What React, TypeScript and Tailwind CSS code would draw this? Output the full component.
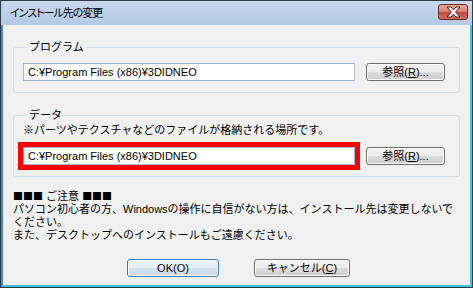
const font = "font-['Liberation_Sans','Noto_Sans_CJK_JP',sans-serif]";

const btnGray =
  "rounded-[3px] border border-[#707070] bg-[linear-gradient(to_bottom,#f2f2f2_0%,#ebebeb_50%,#dddddd_51%,#cfcfcf_100%)] shadow-[inset_0_0_0_1px_#fcfcfc] text-[11px] leading-none text-black flex items-center justify-center";

const BrowseButton = () => (
  <button className={`${btnGray} w-[79px] h-[18px] shrink-0`}>
    参照(<span className="underline">R</span>)...
  </button>
);

const PathBox = ({ marked = false }: { marked?: boolean }) => (
  <div
    className={`w-[332px] h-[18px] bg-white border border-[#a4b9d1] flex items-center pl-[4px] text-[11px] leading-none ${
      marked ? "outline-[5px] outline-solid outline-[#ff0000]" : ""
    }`}
  >
    C:¥Program Files (x86)¥3DIDNEO
  </div>
);

const CloseIcon = () => (
  <svg width="15" height="12" viewBox="0 0 15 12">
    <path
      d="M1 1h4L7.5 3.8 10 1h4L9.6 6 14 11h-4L7.5 8.2 5 11H1l4.4-5z"
      fill="#ffffff"
      stroke="#4a2320"
      strokeWidth="1"
      strokeLinejoin="round"
    />
  </svg>
);

const Squares = () => (
  <span className="font-['Noto_Sans_CJK_JP',sans-serif] text-[10px]">■■■</span>
);

export default function App() {
  return (
    <div className={`${font} w-[473px] h-[288px] border border-[#2e3a48] bg-[#2e3a48] flex flex-col text-black`}>
      {/* title bar */}
      <div className="h-[24px] shrink-0 bg-linear-to-b from-[#c8d8ed] to-[#b4c9e4] flex items-center justify-between pl-[7px] pr-[4px] border-l-2 border-[#b9cde6]">
        <span className="text-[11px] tracking-[-1px] [font-feature-settings:'palt'] text-black">
          インストール先の変更
        </span>
        <div className="w-[30px] h-[16px] -mt-[3px] rounded-[3px] border border-[#6b2a22] bg-[linear-gradient(to_bottom,#eaa898_0%,#d98170_45%,#c24a3a_55%,#d0705c_100%)] flex items-center justify-center">
          <CloseIcon />
        </div>
      </div>

      {/* client */}
      <div className="flex-1 bg-[#f0f0f0] border-l-2 border-l-[#3b86cf] border-r-2 border-r-[#3cc3ec] border-b-2 border-b-[#3cc3ec] px-[10px] flex flex-col">
        <fieldset className="mt-[15px] border border-[#d5dfe5] rounded-[3px] pl-[9px] pr-[14px] pb-[11px]">
          <legend className="ml-[4px] px-[2px] text-[11px] leading-[14px]">プログラム</legend>
          <div className="mt-[9px] flex items-end gap-[11px]">
            <PathBox />
            <BrowseButton />
          </div>
        </fieldset>

        <fieldset className="mt-[15px] border border-[#d5dfe5] rounded-[3px] pl-[9px] pr-[14px] pb-[11px]">
          <legend className="ml-[4px] px-[2px] text-[11px] leading-[14px]">データ</legend>
          <p className="mt-[1px] text-[11px] leading-[14px]">※パーツやテクスチャなどのファイルが格納される場所です。</p>
          <div className="mt-[10px] flex items-center gap-[11px]">
            <PathBox marked />
            <BrowseButton />
          </div>
        </fieldset>

        <div className="mt-[12px] text-[11px] leading-[13px]">
          <p>
            <Squares /> ご注意 <Squares />
          </p>
          <p>
            パソコン初心者の方、Windowsの操作に自信がない方は、インストール先は変更しないで
            <br />
            ください。
          </p>
          <p>また、デスクトップへのインストールもご遠慮ください。</p>
        </div>

        <div className="mt-[17px] flex justify-center gap-[35px] pl-[4px]">
          <button className="w-[92px] h-[18px] rounded-[3px] border border-[#3c7fb1] bg-[linear-gradient(to_bottom,#eef4f9_0%,#e4edf4_50%,#d7e3ed_51%,#cddbe7_100%)] shadow-[inset_0_0_0_1px_#f6fbff] text-[11px] leading-none flex items-center justify-center">
            OK(O)
          </button>
          <button className={`${btnGray} w-[96px] h-[18px]`}>
            キャンセル(<span className="underline">C</span>)
          </button>
        </div>
      </div>
    </div>
  );
}
